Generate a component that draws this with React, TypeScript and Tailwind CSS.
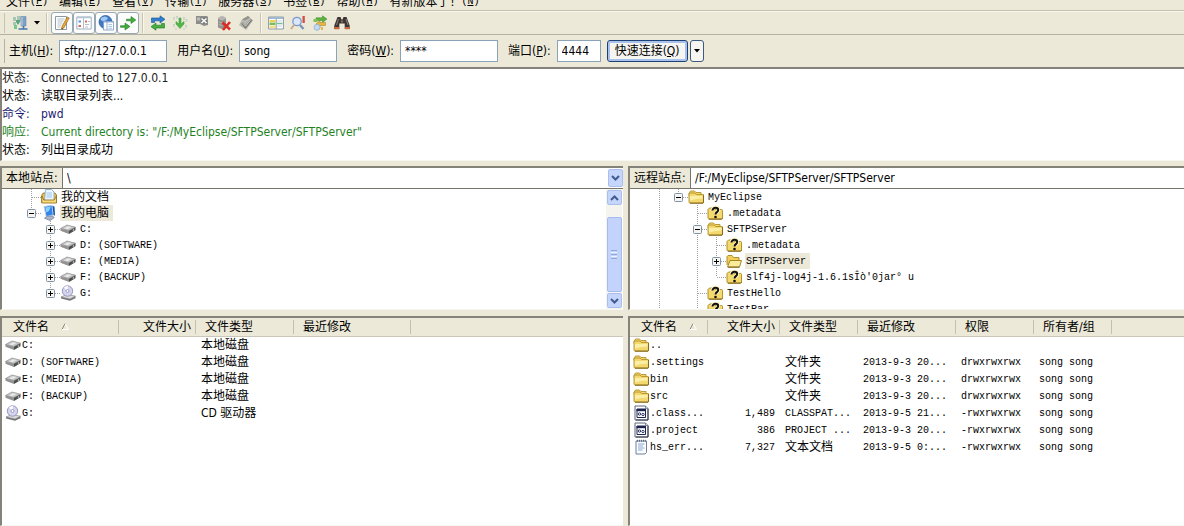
import type { ReactNode } from "react";
import clsx from "clsx";

type IconProps = { className?: string };

const MENUS = [
  ["文件", "F"],
  ["编辑", "E"],
  ["查看", "V"],
  ["传输", "T"],
  ["服务器", "S"],
  ["书签", "B"],
  ["帮助", "H"],
  ["有新版本了！", "N"],
];

const LOG = [
  { kind: "状态:", text: "Connected to 127.0.0.1", color: "text-[#222]" },
  { kind: "状态:", text: "读取目录列表...", color: "text-black" },
  { kind: "命令:", text: "pwd", color: "text-[#1a1a70]" },
  { kind: "响应:", text: 'Current directory is: "/F:/MyEclipse/SFTPServer/SFTPServer"', color: "text-[#1e821e]" },
  { kind: "状态:", text: "列出目录成功", color: "text-black" },
];

/* ---------- icons ---------- */

function Svg({ children, className }: { children: ReactNode; className?: string }) {
  return (
    <svg viewBox="0 0 16 16" className={clsx("w-4 h-4 shrink-0", className)} aria-hidden="true">
      {children}
    </svg>
  );
}

function FolderIcon() {
  return (
    <Svg>
      <path d="M1 4.500 2.500 2h4L8 3.500h5v3H1z" fill="#f3d667" stroke="#b3922c" strokeWidth=".9" />
      <path d="M1 13V4.500L2 4h5l1.500 1.500H15a.6.6 0 0 1 .6.600V13a1 1 0 0 1-1 1H2a1 1 0 0 1-1-1z" fill="#f3d86e" stroke="#b3922c" strokeWidth=".9" />
      <path d="M2 7h12.500v2.500q-6 0-12.500 2z" fill="#fbeea6" />
      <path d="M2 14.200h13l.6-1V6" fill="none" stroke="#80661a" />
    </Svg>
  );
}

function OpenFolderIcon() {
  return (
    <Svg>
      <path d="M1 12V3.500L2 2.500h4L7.500 4.500H13v3" fill="#f0cf58" stroke="#a88720" strokeWidth=".9" />
      <path d="M1.500 14 4 7.500h11.500L13.500 14z" fill="#fbeb9a" stroke="#9a7a1c" strokeWidth=".9" />
      <path d="M2 14.200h11.500" stroke="#80661a" />
    </Svg>
  );
}

function UnknownFolderIcon() {
  return (
    <Svg>
      <path d="M1 13V4.500L2.500 3h3L7 4.500h7.500a1 1 0 0 1 1 1V13a1 1 0 0 1-1 1H2a1 1 0 0 1-1-1z" fill="#f4d96c" stroke="#a88720" strokeWidth=".9" />
      <path d="M2 14.200h12.500l1-1" fill="none" stroke="#80661a" />
      <path d="M5.300 5.600C5.300 3 7 2.200 8.400 2.200c1.700 0 3.100 1 3.100 2.700 0 2.300-2.800 2.200-2.800 4.500" fill="none" stroke="#fff6c8" strokeWidth="3.400" />
      <path d="M5.500 5.600C5.500 3.500 7 2.800 8.400 2.800c1.600 0 2.800.8 2.800 2.200 0 2.100-2.700 2.200-2.700 4.400" fill="none" stroke="#111" strokeWidth="2" />
      <circle cx="8.500" cy="12" r="1.300" fill="#111" />
    </Svg>
  );
}

function DriveIcon() {
  return (
    <Svg>
      <path d="M.5 7.500 7 4l8.500 2.200L9 9.700z" fill="#c4c4c4" stroke="#8d8d8d" strokeWidth=".7" />
      <path d="M.5 7.500v2.300l8.500 3.200V9.700z" fill="#929292" />
      <path d="M9 9.700V13l6.500-3.800v-3z" fill="#4e4e4e" />
      <path d="M4 7.200 8 5.200l3.500.9-4 2.100z" fill="#e9e9e9" />
      <circle cx="13.500" cy="9" r=".8" fill="#d8e8d8" />
    </Svg>
  );
}

function CdDriveIcon() {
  return (
    <Svg>
      <path d="M1 12 7 9.500l8.500 1.700L10 14z" fill="#dcdcdc" stroke="#888" strokeWidth=".7" />
      <path d="M1 12v1.500l9 2.300V14zM10 14v1.800l5.500-2.600v-2z" fill="#777" />
      <circle cx="7.500" cy="6" r="5.200" fill="#d5d5f0" stroke="#9090b8" strokeWidth=".9" />
      <path d="M7.500 6 4 2.500A5 5 0 0 1 8 1z" fill="#fff" />
      <circle cx="7.500" cy="6" r="1.500" fill="#fff" stroke="#8080ac" strokeWidth=".7" />
    </Svg>
  );
}

function DocumentsIcon() {
  return (
    <Svg>
      <path d="M.8 13.500V6l1.500-2H14l1.500 2v7.500z" fill="#e8bf52" stroke="#98741e" strokeWidth=".9" />
      <path d="M4.500.5h6l2.500 2.500v8.500H3.500z" fill="#eef7ff" stroke="#7fa6cc" strokeWidth=".8" />
      <path d="M5.500 4h5.500M5.500 6h5.500M5.500 8h5.500" stroke="#8ec0ea" strokeWidth=".9" />
      <path d="M.8 14V7l2 4h10.400l2.300-4v7z" fill="#f6dc7c" stroke="#98741e" strokeWidth=".9" />
    </Svg>
  );
}

function ComputerIcon() {
  return (
    <Svg>
      <path d="m3 1.500 8-1.200 1.200 9.700-7 1.500z" fill="#2f86e8" stroke="#b8cfe8" />
      <path d="m4.300 2.400 5.500-.9L8 6 5.200 7.500z" fill="#8cd0ff" />
      <path d="m11.500.5 2 1.200.5 9-1.500-.7z" fill="#1c4fa6" />
      <path d="m3.500 13.200 3-2.200 5.500.2 1.200 1.500L9 15.500z" fill="#a9b6cb" stroke="#6b7890" strokeWidth=".7" />
    </Svg>
  );
}

function AppFileIcon() {
  return (
    <Svg>
      <path d="M2 1h10.500L15 3.500V15H2z" fill="#fff" stroke="#5e6576" />
      <path d="M12.500 1v2.500H15" fill="#cdd4e4" stroke="#5e6576" strokeWidth=".7" />
      <path d="M4 4h8.500v8.500H4z" fill="#fff" stroke="#1d2450" />
      <path d="M3.500 4h9v2.200h-9z" fill="#1d2450" />
      <circle cx="6.500" cy="9" r="1.200" fill="none" stroke="#1d2450" strokeWidth=".9" />
      <circle cx="10" cy="9.500" r="1.200" fill="none" stroke="#1d2450" strokeWidth=".9" />
      <path d="M15 4v11H3" fill="none" stroke="#363c4c" />
    </Svg>
  );
}

function TextFileIcon() {
  return (
    <Svg>
      <path d="M3 2h10.500v11.500L12 15H3z" fill="#fbfdff" stroke="#6f7f9c" />
      <path d="M4.500.8v2M6.500.8v2M8.500.8v2M10.500.8v2M12.300.8v2" stroke="#55617a" strokeWidth=".9" />
      <path d="M5 5h6.500M5 7h5M5 9h6.500M5 11h4.500" stroke="#7c9ccc" strokeWidth=".9" />
    </Svg>
  );
}

function SiteManagerIcon() {
  return (
    <Svg>
      <path d="M1 2h3v4H1zM5 1h4v5H5zM1 7h3v3H1z" fill="#a9c5b4" />
      <path d="M2 10h3v4H2z" fill="#76c887" />
      <path d="m4 7 2 3 2-3v-2H4z" fill="#5aa47e" />
      <path d="M9 1.500h5V11H9z" fill="#7ea0c6" stroke="#6b8bb0" strokeWidth=".6" />
      <path d="M10 2v8.500" stroke="#bad2ec" />
      <path d="M11.500 11v2.500M6.500 14h9" stroke="#4676b0" strokeWidth="1.600" />
    </Svg>
  );
}

function LogIcon() {
  return (
    <Svg>
      <path d="M1.500 1.500h11v13h-11z" fill="#fff" stroke="#8d99a5" />
      <path d="M3.500 4h7M3.500 6h6M3.500 8h5M3.500 10h4M3.500 12h3" stroke="#a8b7c5" strokeWidth=".9" />
      <path d="m13.200 2 2 1-5.400 10-2.100 1.200.2-2.400z" fill="#e8ab3c" stroke="#9a681e" strokeWidth=".7" />
      <path d="m7.700 14.200.1-1.400 1 .6z" fill="#222" />
    </Svg>
  );
}

function LocalTreeIcon() {
  return (
    <Svg>
      <path d="M.8 2h14.400v12H.8z" fill="#fff" stroke="#a3b1c0" />
      <path d="M1 2.500h14" stroke="#b4c5d8" strokeWidth="1.600" />
      <path d="M7.500 3v11" stroke="#b4bcc4" />
      <path d="M2.500 5.500h2.500v2H2.500z" fill="#5b93dc" />
      <path d="M2.500 10h2.500v2H2.500zM9 5.500h2v2H9z" fill="#cf6a62" />
      <path d="M9 9.500h4M12 6.500h2M9 12h3" stroke="#b4bcc4" />
    </Svg>
  );
}

function RemoteTreeIcon() {
  return (
    <Svg>
      <circle cx="7.500" cy="7" r="6.500" fill="#3f78c4" stroke="#24539c" strokeWidth=".7" />
      <path d="M3 3q4-3 7 0Q9 6 5 6 2 6 3 3z" fill="#9fc8f2" />
      <path d="M5.500 6.500h10v8.500h-10z" fill="#f7fbff" stroke="#7a98c0" strokeWidth=".8" />
      <path d="M5.500 7h10M9 7v8" stroke="#8fa9cc" strokeWidth=".9" />
      <path d="M10.500 9.500h3.500M10.500 11.500h3.500M10.500 13.300h3.500" stroke="#9eb4d3" strokeWidth=".8" />
    </Svg>
  );
}

function QueueIcon() {
  return (
    <Svg>
      <path d="M6.500 4.200H11V1.500L15.800 5 11 8.500V5.800H6.500z" fill="#3fae3c" stroke="#1e7a22" strokeWidth=".6" />
      <path d="M.5 10.700H5V8l5 3.500L5 15v-2.700H.5z" fill="#3fae3c" stroke="#1e7a22" strokeWidth=".6" />
    </Svg>
  );
}

function RefreshIcon() {
  return (
    <Svg>
      <path d="M1.500 7.500V3h8.500V.8L15 4.300 10 8V5.800H4.500v1.700z" fill="#2f80cf" stroke="#174f90" strokeWidth=".6" />
      <path d="M14.500 8.500V13H6v2.200L1 11.700 6 8v2.200h5.500V8.500z" fill="#45ae3f" stroke="#1e7626" strokeWidth=".6" />
    </Svg>
  );
}

function ProcessQueueIcon() {
  return (
    <Svg>
      <path d="M2 2v3M5 1v3M12 2v3M14.500 4v3M2 9v3M14 10v3" stroke="#bccdc3" strokeWidth="1.800" strokeDasharray="1.400 .8" />
      <path d="M7 3h2v6l3-2.500V9l-4 4.500L4 9V6.500L7 9z" fill="#52b64a" stroke="#45a040" strokeWidth=".6" />
      <path d="M3 14h2M11 14h2" stroke="#bccdc3" />
    </Svg>
  );
}

function CancelIcon() {
  return (
    <Svg>
      <path d="M2 1h11l1 1v8l-4 1-4-2H2z" fill="#8d8d8b" />
      <path d="M7 2.500h6v6H7z" fill="#777" />
      <path d="m7.500 3.500 5 4.500m0-4.500L7.500 8" stroke="#fff" strokeWidth="1.600" />
      <path d="M3 2.500h3v3H3z" fill="#bbb" />
    </Svg>
  );
}

function DisconnectIcon() {
  return (
    <Svg>
      <path d="m2 3 4-2 4 2v10l-3 1.500L2 12.500z" fill="#94928e" />
      <path d="m2 3 4-2 4 2-4 2zM3 7l3 1M3 9.500l3 1" fill="#b4b2ae" stroke="#c9c7c2" strokeWidth=".7" />
      <path d="m6.500 7.500 7.500 7M14 7l-7 8" stroke="#d92c25" strokeWidth="2.500" />
    </Svg>
  );
}

function ReconnectIcon() {
  return (
    <Svg>
      <path d="m4 4.500 6-3.500 5 4.500-7 9.500-7-5z" fill="#b9b8b1" />
      <path d="m4 4.500 6-3.500 2 1.500-5 3z" fill="#92918b" />
      <path d="m4 8 3.500 4L13.500 4.500" fill="none" stroke="#7c7c77" strokeWidth="2.400" />
      <path d="m4.500 8 3 3.200 5.300-6.700" fill="none" stroke="#e3e2dc" strokeWidth=".8" />
    </Svg>
  );
}

function FilterIcon() {
  return (
    <Svg>
      <path d="M.6 2h14.800v12H.6z" fill="#fff" stroke="#8d9aa8" />
      <path d="M1 2h14v2H1z" fill="#9fb9cf" />
      <path d="M1.500 5h6v2h-6z" fill="#f1d04b" />
      <path d="M1.500 7.500h6v2.500h-6z" fill="#79bd5b" />
      <path d="M1.500 10.500h6v2.500h-6z" fill="#f4de83" />
      <path d="M9 6h5M9 11h5" stroke="#c5d2da" />
      <path d="M9 8.500h5.500" stroke="#79bd9b" strokeWidth="1.500" />
      <path d="M8.200 4v10" stroke="#8d9aa8" />
    </Svg>
  );
}

function CompareIcon() {
  return (
    <Svg>
      <path d="M3 2h7v5H3z" fill="#dde3f1" />
      <path d="M12.500 1h2.300v7h-2.300z" fill="#d54c47" />
      <circle cx="7" cy="6.500" r="4.200" fill="#d8e7fa" stroke="#7e99c9" strokeWidth="1.300" />
      <path d="m4 10-3 4" stroke="#c7ae8b" strokeWidth="2" />
      <path d="m10 10 3.500 4" stroke="#7790bd" strokeWidth="2.200" />
    </Svg>
  );
}

function SyncBrowseIcon() {
  return (
    <Svg>
      <path d="M4 2.800h6.500V.8L15 4l-4.500 3.500V5.500H4z" fill="#5bb23e" stroke="#39842a" strokeWidth=".5" />
      <path d="M1.500 4h4v3h-4z" fill="#7fc25b" />
      <path d="M13.500 7.500H8v-2L4 9l4 3.500v-2h5.500z" fill="#e8b443" stroke="#a67a23" strokeWidth=".5" />
      <circle cx="5" cy="12.300" r="3" fill="#c3d9f0" stroke="#8ba8ca" strokeWidth=".7" />
      <path d="M10 12v3" stroke="#e8b443" strokeWidth="2" />
    </Svg>
  );
}

function BinocularsIcon() {
  return (
    <Svg>
      <path d="M3.500 2h3l1 2.500h1L9.500 2h3l3.200 8.500V14h-5V8.500H5.300V14h-5v-3.500z" fill="#3b3533" />
      <path d="m4.500 4-2 6M12 4l2 6" stroke="#8a817c" />
      <path d="M.6 12h4.500v2.300H.6zM11 12h4.500v2.300H11z" fill="#d3653b" />
      <path d="M7 5.500h2v2H7z" fill="#9a6a52" />
    </Svg>
  );
}

function Chevron({ className }: IconProps) {
  return (
    <svg viewBox="0 0 9 6" className={clsx("w-[9px] h-[6px]", className)} aria-hidden="true">
      <path d="m1 1 3.500 3.500L8 1" fill="none" stroke="#405a92" strokeWidth="2" />
    </svg>
  );
}

function Caret() {
  return (
    <svg viewBox="0 0 6 4" className="w-[6px] h-1" aria-hidden="true">
      <path d="M0 0h6L3 3.500z" fill="#000" />
    </svg>
  );
}

/* ---------- toolbar ---------- */

function ToolButton({ label, pressed, children }: { label: string; pressed?: boolean; children: ReactNode }) {
  return (
    <button
      aria-label={label}
      className={clsx(
        "w-[22px] h-[22px] flex items-center justify-center shrink-0",
        pressed && "bg-[#fbfcfb] border border-[#98a8b4] rounded-[3px]"
      )}
    >
      {children}
    </button>
  );
}

function Separator() {
  return <span className="w-0.5 h-5 mx-[3px] border-l border-[#c9c5b2] border-r border-r-[#f8f6ee]" />;
}

function Field({
  id,
  label,
  hotkey,
  value,
  width,
  type = "text",
}: {
  id: string;
  label: string;
  hotkey: string;
  value: string;
  width: string;
  type?: string;
}) {
  return (
    <div className="flex items-center gap-1.5">
      <label htmlFor={id} className="whitespace-nowrap">
        {label}(<u>{hotkey}</u>):
      </label>
      <input
        id={id}
        type={type}
        defaultValue={value}
        className={clsx("h-[22px] px-1 bg-white border border-[#8aa3b8] outline-none", width)}
      />
    </div>
  );
}

/* ---------- trees ---------- */

type Guide = "blank" | "line" | "tee" | "end" | "plus" | "plusEnd" | "minus" | "minusEnd";

function GuideCell({ kind }: { kind: Guide }) {
  if (kind === "blank") return <span className="w-[19px] shrink-0" />;
  const box = kind.startsWith("plus") || kind.startsWith("minus");
  const drawing = (
    <svg viewBox="0 0 19 16" className="w-[19px] h-4 shrink-0" aria-hidden="true">
      <path
        d={kind.toLowerCase().endsWith("end") ? "M9.500 0v8" : "M9.500 0v16"}
        stroke="#a0a0a0"
        strokeDasharray="1 1"
      />
      {kind !== "line" && <path d="M10 8.500h9" stroke="#a0a0a0" strokeDasharray="1 1" />}
      {box && (
        <>
          <rect x="5.500" y="4.500" width="8" height="8" rx="1" fill="#f6f5f0" stroke="#7f93a8" />
          <path d="M7 8.500h5" stroke="#000" />
          {kind.startsWith("plus") && <path d="M9.500 6v5" stroke="#000" />}
        </>
      )}
    </svg>
  );
  if (!box) return drawing;
  return (
    <button aria-label={kind.startsWith("plus") ? "展开" : "折叠"} className="shrink-0">
      {drawing}
    </button>
  );
}

function TreeRow({
  guides,
  icon,
  label,
  cjk,
  selected,
}: {
  guides: Guide[];
  icon: ReactNode;
  label: string;
  cjk?: boolean;
  selected?: boolean;
}) {
  return (
    <li className="flex items-center h-4">
      {guides.map((g, i) => (
        <GuideCell key={i} kind={g} />
      ))}
      <span>{icon}</span>
      <span
        className={clsx(
          "ml-[3px] px-px h-4 whitespace-pre",
          cjk
            ? "text-[12px] leading-4"
            : "font-['Liberation_Mono','Noto_Sans_CJK_SC',monospace] text-[10px] leading-[18px]",
          selected && "bg-[#ece9d8] pr-1"
        )}
      >
        {label}
      </span>
    </li>
  );
}

function ScrollBar() {
  const cap = "w-[15px] h-[15px] flex items-center justify-center bg-[#c6d5fb] border border-[#a9bff0] rounded-[2px]";
  return (
    <div className="w-4 mr-px flex flex-col items-center bg-[#f5f4ef] py-px shrink-0">
      <button aria-label="向上滚动" className={cap}>
        <Chevron className="rotate-180" />
      </button>
      <div className="grow w-[15px] pt-3 pb-px flex">
        <div className="w-full rounded-[2px] bg-[#c3d3fb] border border-[#a4bbf0] flex flex-col items-center justify-center gap-px">
          <span className="w-1.5 h-px bg-[#8ea8e0]" />
          <span className="w-1.5 h-px bg-[#eef4fe]" />
          <span className="w-1.5 h-px bg-[#8ea8e0]" />
          <span className="w-1.5 h-px bg-[#eef4fe]" />
          <span className="w-1.5 h-px bg-[#8ea8e0]" />
        </div>
      </div>
      <button aria-label="向下滚动" className={cap}>
        <Chevron />
      </button>
    </div>
  );
}

function PathBar({ id, label, path, arrow }: { id: string; label: string; path: string; arrow?: boolean }) {
  return (
    <div className="flex h-[21px] border-b border-[#77756b] bg-white">
      <label
        htmlFor={id}
        className="w-[61px] pl-1 shrink-0 bg-[#ece9d8] border-r border-[#77756b] leading-[21px] whitespace-nowrap"
      >
        {label}
      </label>
      <div className="relative grow">
        <select id={id} className="appearance-none w-full h-5 pl-1 bg-white outline-none leading-5">
          <option>{path}</option>
        </select>
        {arrow && (
          <span className="absolute right-0 top-px w-[15px] h-[18px] flex items-center justify-center bg-[#c6d5fb] border border-[#a9bff0] rounded-[2px] pointer-events-none">
            <Chevron />
          </span>
        )}
      </div>
    </div>
  );
}

/* ---------- file lists ---------- */

type Column = { title: string; width: string; right?: boolean; sorted?: boolean };
type FileEntry = { icon: ReactNode; cells: string[] };

const LOCAL_COLUMNS: Column[] = [
  { title: "文件名", width: "w-[117px]", sorted: true },
  { title: "文件大小", width: "w-[77px]", right: true },
  { title: "文件类型", width: "w-[98px]" },
  { title: "最近修改", width: "w-[117px]" },
];

const REMOTE_COLUMNS: Column[] = [
  { title: "文件名", width: "w-[78px]", sorted: true },
  { title: "文件大小", width: "w-[72px]", right: true },
  { title: "文件类型", width: "w-[78px]" },
  { title: "最近修改", width: "w-[98px]" },
  { title: "权限", width: "w-[78px]" },
  { title: "所有者/组", width: "w-[78px]" },
];

const LOCAL_FILES: FileEntry[] = [
  { icon: <DriveIcon />, cells: ["C:", "", "本地磁盘", ""] },
  { icon: <DriveIcon />, cells: ["D: (SOFTWARE)", "", "本地磁盘", ""] },
  { icon: <DriveIcon />, cells: ["E: (MEDIA)", "", "本地磁盘", ""] },
  { icon: <DriveIcon />, cells: ["F: (BACKUP)", "", "本地磁盘", ""] },
  { icon: <CdDriveIcon />, cells: ["G:", "", "CD 驱动器", ""] },
];

const REMOTE_FILES: FileEntry[] = [
  { icon: <FolderIcon />, cells: ["..", "", "", "", "", ""] },
  { icon: <FolderIcon />, cells: [".settings", "", "文件夹", "2013-9-3 20...", "drwxrwxrwx", "song song"] },
  { icon: <FolderIcon />, cells: ["bin", "", "文件夹", "2013-9-3 20...", "drwxrwxrwx", "song song"] },
  { icon: <FolderIcon />, cells: ["src", "", "文件夹", "2013-9-3 20...", "drwxrwxrwx", "song song"] },
  { icon: <AppFileIcon />, cells: [".class...", "1,489", "CLASSPAT...", "2013-9-5 21...", "-rwxrwxrwx", "song song"] },
  { icon: <AppFileIcon />, cells: [".project", "386", "PROJECT ...", "2013-9-3 20...", "-rwxrwxrwx", "song song"] },
  { icon: <TextFileIcon />, cells: ["hs_err...", "7,327", "文本文档", "2013-9-5 0:...", "-rwxrwxrwx", "song song"] },
];

function FileTable({ columns, files }: { columns: Column[]; files: FileEntry[] }) {
  return (
    <table className="table-fixed w-full border-collapse">
      <thead>
        <tr className="h-[18px] bg-[#ece9d8] border-b border-[#cbc7b8]">
          {columns.map((c) => (
            <th key={c.title} className={clsx("p-0 font-normal", c.width)}>
              <div
                className={clsx(
                  "h-3.5 flex items-center border-r border-[#c4c0ae] whitespace-nowrap",
                  c.right ? "justify-end pr-1" : c.sorted ? "pl-[11px]" : "pl-[9px]"
                )}
              >
                {c.title}
                {c.sorted && (
                  <svg viewBox="0 0 8 7" className="w-2 h-[7px] ml-3" aria-hidden="true">
                    <path d="M1 6.500 4 .5" stroke="#8b897e" />
                    <path d="m4 .5 3.500 6H1" fill="none" stroke="#fff" />
                  </svg>
                )}
              </div>
            </th>
          ))}
          <th className="p-0" />
        </tr>
      </thead>
      <tbody>
        {files.map((f) => (
          <tr key={f.cells[0]} className="h-[17px]">
            {f.cells.map((cell, i) => (
              <td
                key={i}
                className={clsx(
                  "p-0 whitespace-pre leading-[17px]",
                  i === 0 ? "pl-[3px]" : "pl-[5px]",
                  columns[i].right && "text-right pr-[5px]",
                  /^[\x20-\x7e]*$/.test(cell) && "font-['Liberation_Mono',monospace] text-[10px]"
                )}
              >
                {i === 0 ? (
                  <span className="flex items-center gap-px h-[17px]">
                    {f.icon}
                    {cell}
                  </span>
                ) : (
                  cell
                )}
              </td>
            ))}
            <td className="p-0" />
          </tr>
        ))}
      </tbody>
    </table>
  );
}

const panel = "min-w-0 bg-white border-t-2 border-l-2 border-[#85827a] border-l-[#85827a] border-b border-b-[#f7f6f0]";

export default function App() {
  return (
    <div className="min-h-screen flex flex-col bg-[#ece9d8] text-black text-[12px] leading-4 font-['DejaVu_Sans_Condensed','Noto_Sans_CJK_SC',sans-serif] overflow-hidden">
      <nav className="h-[11px] shrink-0 flex items-end gap-[11px] pl-1.5 border-b border-[#c5c1ae]">
        {MENUS.map(([name, key]) => (
          <button key={name} className="flex items-center h-4 whitespace-nowrap">
            {name}
            <span className="font-['Liberation_Mono',monospace] text-[10px]">
              (<u>{key}</u>)
            </span>
          </button>
        ))}
      </nav>

      <div className="flex items-center h-6 shrink-0 pl-1 border-b border-[#b5b2a2] border-t border-t-[#f8f6ee]">
        <span className="w-px h-5 mr-1 bg-[#c9c5b2]" />
        <ToolButton label="站点管理器">
          <SiteManagerIcon />
        </ToolButton>
        <button aria-label="站点列表" className="w-3 h-5 flex items-center justify-center">
          <Caret />
        </button>
        <Separator />
        <ToolButton label="消息日志" pressed>
          <LogIcon />
        </ToolButton>
        <ToolButton label="本地目录树" pressed>
          <LocalTreeIcon />
        </ToolButton>
        <ToolButton label="远程目录树" pressed>
          <RemoteTreeIcon />
        </ToolButton>
        <ToolButton label="传输队列" pressed>
          <QueueIcon />
        </ToolButton>
        <Separator />
        <ToolButton label="刷新">
          <RefreshIcon />
        </ToolButton>
        <ToolButton label="处理队列">
          <ProcessQueueIcon />
        </ToolButton>
        <ToolButton label="取消">
          <CancelIcon />
        </ToolButton>
        <ToolButton label="断开">
          <DisconnectIcon />
        </ToolButton>
        <ToolButton label="重新连接">
          <ReconnectIcon />
        </ToolButton>
        <Separator />
        <ToolButton label="过滤器">
          <FilterIcon />
        </ToolButton>
        <ToolButton label="目录比较">
          <CompareIcon />
        </ToolButton>
        <ToolButton label="同步浏览">
          <SyncBrowseIcon />
        </ToolButton>
        <ToolButton label="查找">
          <BinocularsIcon />
        </ToolButton>
      </div>

      <form className="flex items-center gap-2.5 h-8 shrink-0 pl-1" onSubmit={(e) => e.preventDefault()}>
        <span className="w-px h-6 -mr-1.5 bg-[#b5b2a2]" />
        <Field id="host" label="主机" hotkey="H" value="sftp://127.0.0.1" width="w-[108px]" />
        <Field id="user" label="用户名" hotkey="U" value="song" width="w-[98px]" />
        <Field id="pass" label="密码" hotkey="W" value="****" width="w-[98px]" />
        <Field id="port" label="端口" hotkey="P" value="4444" width="w-11" />
        <div className="flex gap-0.5 -ml-1">
          <button
            type="submit"
            className="w-[81px] h-[22px] rounded-[3px] border border-[#1f3f77] bg-[#f6f5f1] ring-2 ring-inset ring-[#a9c2ec] whitespace-nowrap"
          >
            快速连接(<u>Q</u>)
          </button>
          <button
            type="button"
            aria-label="历史记录"
            className="w-3.5 h-[22px] rounded-[3px] border border-[#3b5a80] bg-[#f6f5f1] flex items-center justify-center"
          >
            <Caret />
          </button>
        </div>
      </form>

      <section className={clsx(panel, "shrink-0 pb-px")}>
        {LOG.map((line, i) => (
          <p key={i} className={clsx("flex h-[18px] leading-[18px] whitespace-nowrap", line.color)}>
            <span className="w-[39px] shrink-0">{line.kind}</span>
            {line.text}
          </p>
        ))}
      </section>

      <main className="grow grid grid-cols-[623fr_556fr] grid-rows-[auto_1fr] gap-x-[5px] gap-y-[6px] pt-[5px]">
        <section className={panel}>
          <PathBar id="local-path" label="本地站点:" path="\" arrow />
          <div className="flex h-[120px] overflow-hidden">
            <ul className="grow pl-5">
              <TreeRow guides={["tee"]} icon={<DocumentsIcon />} label="我的文档" cjk />
              <TreeRow guides={["minusEnd"]} icon={<ComputerIcon />} label="我的电脑" cjk selected />
              <TreeRow guides={["blank", "plus"]} icon={<DriveIcon />} label="C:" />
              <TreeRow guides={["blank", "plus"]} icon={<DriveIcon />} label="D: (SOFTWARE)" />
              <TreeRow guides={["blank", "plus"]} icon={<DriveIcon />} label="E: (MEDIA)" />
              <TreeRow guides={["blank", "plus"]} icon={<DriveIcon />} label="F: (BACKUP)" />
              <TreeRow guides={["blank", "plusEnd"]} icon={<CdDriveIcon />} label="G:" />
            </ul>
            <ScrollBar />
          </div>
        </section>

        <section className={panel}>
          <PathBar id="remote-path" label="远程站点:" path="/F:/MyEclipse/SFTPServer/SFTPServer" />
          <div className="flex h-[120px] overflow-hidden">
            <ul className="grow pl-5">
              <TreeRow guides={["line", "minusEnd"]} icon={<FolderIcon />} label="MyEclipse" />
              <TreeRow guides={["line", "blank", "tee"]} icon={<UnknownFolderIcon />} label=".metadata" />
              <TreeRow guides={["line", "blank", "minus"]} icon={<FolderIcon />} label="SFTPServer" />
              <TreeRow guides={["line", "blank", "line", "tee"]} icon={<UnknownFolderIcon />} label=".metadata" />
              <TreeRow guides={["line", "blank", "line", "plus"]} icon={<OpenFolderIcon />} label="SFTPServer" selected />
              <TreeRow
                guides={["line", "blank", "line", "end"]}
                icon={<UnknownFolderIcon />}
                label="slf4j-log4j-1.6.1sÎò'0jar° u"
              />
              <TreeRow guides={["line", "blank", "tee"]} icon={<UnknownFolderIcon />} label="TestHello" />
              <TreeRow guides={["line", "blank", "tee"]} icon={<UnknownFolderIcon />} label="TestRar" />
            </ul>
          </div>
        </section>

        <section className={panel}>
          <FileTable columns={LOCAL_COLUMNS} files={LOCAL_FILES} />
        </section>
        <section className={panel}>
          <FileTable columns={REMOTE_COLUMNS} files={REMOTE_FILES} />
        </section>
      </main>
    </div>
  );
}
